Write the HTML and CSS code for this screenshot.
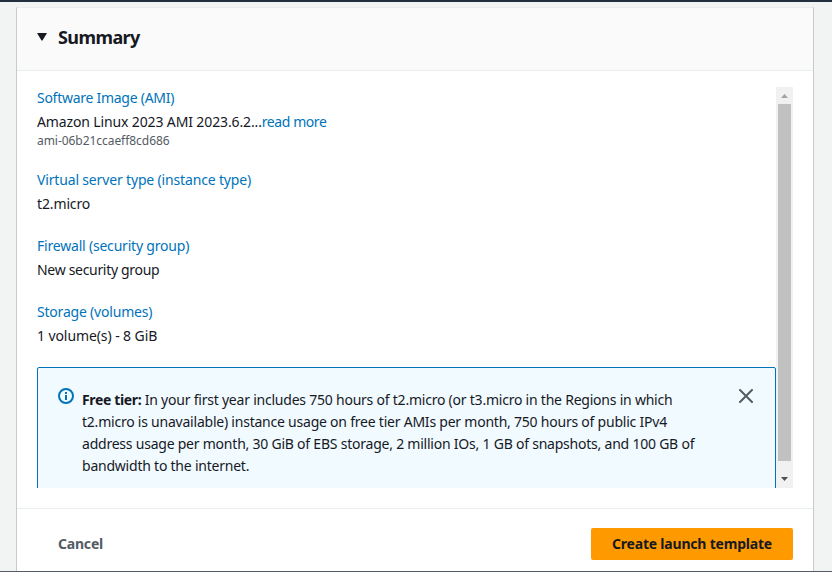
FILE: index.html
```
<!DOCTYPE html>
<html lang="en"><head><meta charset="utf-8"><title>Summary</title><link rel="stylesheet" href="styles.css"></head>
<body>
<main class="panel">
<header class="head"><svg class="caret" viewBox="0 0 10 8"><path d="M0 0h10L5.500 7.500h-1z"/></svg><h2>Summary</h2></header>
<div class="body">
<div class="content">
<section class="image"><a class="label">Software Image (AMI)</a><p>Amazon Linux 2023 AMI 2023.6.2...<a class="more">read more</a></p><small>ami-06b21ccaeff8cd686</small></section>
<section class="type"><a class="label">Virtual server type (instance type)</a><p>t2.micro</p></section>
<section class="firewall"><a class="label">Firewall (security group)</a><p>New security group</p></section>
<section class="storage"><a class="label">Storage (volumes)</a><p>1 volume(s) - 8 GiB</p></section>
<div class="alert">
<svg class="info" viewBox="0 0 16 16"><circle cx="8" cy="8" r="7"/><path d="M8 7v5M8 4v2"/></svg>
<div class="text"><b>Free tier:</b> In your first year includes 750 hours of t2.micro (or t3.micro in the Regions in which<br>t2.micro is unavailable) instance usage on free tier AMIs per month, 750 hours of public IPv4<br>address usage per month, 30 GiB of EBS storage, 2 million IOs, 1 GB of snapshots, and 100 GB of<br>bandwidth to the internet.</div>
<svg class="close" viewBox="0 0 14 14"><path d="M1 1l12 12M13 1L1 13"/></svg>
</div>
</div>
<div class="scroll"><svg viewBox="0 0 17 17"><path class="up" d="M5 11L8.500 7l3.500 4z"/></svg><i></i><svg viewBox="0 0 17 17"><path d="M5 6l3.500 4L12 6z"/></svg></div>
</div>
<footer class="foot"><button class="cancel">Cancel</button><button class="create">Create launch template</button></footer>
</main>
</body></html>
```
FILE: styles.css
```
*{box-sizing:border-box}
body{margin:0;height:572px;overflow:hidden;background:#f2f3f3;border-top:2px solid #232f3e;border-bottom:1px solid #545b64;padding:5px 18px 0 16px;font:14px/22px "Noto Sans",sans-serif;color:#16191f}
.panel{height:564px;background:#fff;border:1px solid #c6cccc;border-top-color:#eaeded;border-bottom:0}
.head{height:63px;background:#fafafa;border-bottom:1px solid #eaeded;display:flex;align-items:center;padding:0 0 5px 20px}
.caret{width:10px;height:8px;margin-right:11px;fill:#16191f}
h2{font-size:18px;line-height:22px;margin:0;letter-spacing:-.58px}
.body{height:401px;margin:16px 20px 0;display:flex}
.content{flex:1;overflow:hidden}
section{margin-bottom:20px}
.label{display:block;margin-bottom:2px;letter-spacing:-.2px}
a{color:#0073bb}
p{margin:0;letter-spacing:-.13px}
small{display:block;font-size:12px;line-height:16px;letter-spacing:-.05px;color:#545b64}
.image .label{letter-spacing:-.27px}
.type .label{letter-spacing:-.16px}
.image .more{letter-spacing:-.42px}
.firewall p{letter-spacing:-.31px}
.storage p{letter-spacing:-.09px}
.alert{height:140px;border:1px solid #0073bb;border-radius:2px;background:#f1faff;display:flex;padding:20px 22px 20px 20px}
.info{width:16px;height:16px;margin-right:8px;fill:none;stroke:#0073bb;stroke-width:2}
.text{flex:1;white-space:nowrap;padding-top:1px;letter-spacing:-.225px}
.text b{letter-spacing:-.35px}
.close{width:14px;height:14px;margin-top:1px;fill:none;stroke:#545b64;stroke-width:2;stroke-linecap:round}
.scroll{width:17px;background:#f1f1f1;display:flex;flex-direction:column}
.scroll i{height:357px;background:#c1c1c1;margin:0 2px 10px}
.scroll svg{flex:none;height:17px;fill:#505050}
.scroll .up{fill:#a3a3a3}
.foot{height:63px;margin-top:20px;border-top:1px solid #eaeded;display:flex;justify-content:space-between;align-items:flex-start;padding:19px 20px 0}
button{font:700 14px/22px "Noto Sans",sans-serif;letter-spacing:-.2px;border:0;background:none;color:#545b64;height:32px;padding:0 21px}
.create{width:202px;padding:0;background:#ff9900;color:#16191f;border-radius:2px}
```
